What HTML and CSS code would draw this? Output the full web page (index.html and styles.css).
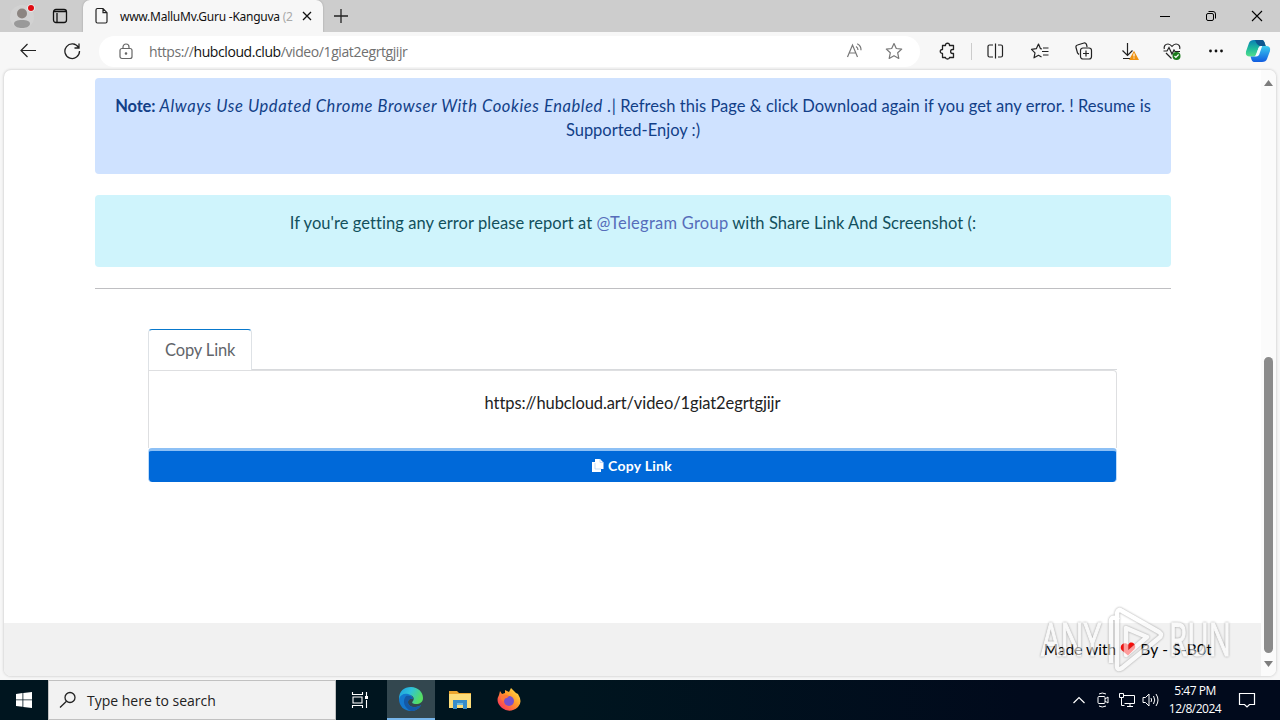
FILE: index.html
```html
<!DOCTYPE html>
<html lang="en">
<head>
<meta charset="utf-8">
<title>www.MalluMv.Guru -Kanguva</title>
<link rel="stylesheet" href="styles.css">
</head>
<body>
<div class="desktop">
  <header class="tabbar">
    <svg class="avatar" width="26" height="28" viewBox="0 0 26 28"><circle cx="13" cy="15" r="12" fill="#d2d2d2"/><circle cx="13" cy="11.500" r="5" fill="#8c8581"/><path d="M5 22c0-3 3-4 8-4s8 1 8 4c-1 3-4 4-8 4s-7-1-8-4z" fill="#999"/><circle cx="22" cy="6" r="3.800" fill="#eee"/><circle cx="22" cy="6" r="3" fill="#e00b12"/></svg>
    <svg class="workspaces" width="16" height="16" viewBox="0 0 16 16" fill="none" stroke="#111" stroke-width="1.300"><rect x="1.500" y="1.500" width="13" height="13" rx="2.500"/><path d="M2 3.500h12M5 5v9"/></svg>
    <div class="tab">
      <svg width="14" height="18" viewBox="0 0 14 18" fill="none" stroke="#222" stroke-width="1.200"><path d="M2.500 1.500h5.500l4 4.200V14.500a1.500 1.500 0 0 1-1.500 1.500h-8A1.500 1.500 0 0 1 1 14.500V3A1.500 1.500 0 0 1 2.500 1.500zM8 1.500v4.200h4"/></svg>
      <span class="tab-title">www.MalluMv.Guru -Kanguva <i>(2</i></span>
      <svg width="10" height="10" viewBox="0 0 10 10" stroke="#111" stroke-width="1.300"><path d="M1 1l8 8M9 1l-8 8"/></svg>
    </div>
    <svg class="newtab" width="16" height="16" viewBox="0 0 16 16" stroke="#222" stroke-width="1.300"><path d="M8 1v14M1 8h14"/></svg>
    <div class="window-buttons">
      <svg width="12" height="12" viewBox="0 0 12 12" fill="none" stroke="#000"><path d="M1 6.500h10"/></svg>
      <svg width="12" height="12" viewBox="0 0 12 12" fill="none" stroke="#000"><rect x="1.500" y="3.500" width="7" height="7" rx="1.500"/><path d="M3.500 1.500H8a2.500 2.500 0 0 1 2.500 2.500v4.500"/></svg>
      <svg width="12" height="12" viewBox="0 0 12 12" fill="none" stroke="#000" stroke-width="1.100"><path d="M1 1l10 10M11 1L1 11"/></svg>
    </div>
  </header>

  <nav class="toolbar">
    <svg class="back" width="18" height="16" viewBox="0 0 18 16" fill="none" stroke="#222" stroke-width="1.200"><path d="M17 7.500H2M8.500 1L2 7.500 8.500 14"/></svg>
    <svg class="reload" width="18" height="18" viewBox="0 0 18 18" fill="none" stroke="#222" stroke-width="1.300"><path d="M15.500 5.500A7.300 7.300 0 1 0 16.500 9M16 1.500v4.500h-4.500"/></svg>
    <div class="address">
      <svg class="lock" width="14" height="17" viewBox="0 0 14 17" fill="none" stroke="#666" stroke-width="1.200"><rect x="1" y="5.500" width="12" height="10" rx="2"/><path d="M4 5.500V4a3 3 0 0 1 6 0v1.500"/><circle cx="7" cy="10.500" r=".7" fill="#666"/></svg>
      <span class="url">https://<b>hubcloud.club</b>/video/1giat2egrtgjijr</span>
      <svg class="read" width="18" height="18" viewBox="0 0 18 18" fill="none" stroke="#777" stroke-width="1.200"><path d="M1.500 15L6.500 3l5 12M3.300 11h6.500M10 4.500q2 1.200 2 3.500M11.200 1.800q4 2 3.800 6.500"/></svg>
      <svg width="18" height="18" viewBox="0 0 18 18" fill="none" stroke="#777" stroke-width="1.200" stroke-linejoin="round"><path d="M9 1.500l2.300 5 5.400.6-4 3.700 1.100 5.600L9 13.700l-4.800 2.700 1.100-5.600-4-3.700 5.400-.6z"/></svg>
    </div>
    <svg class="ext" width="20" height="20" viewBox="0 0 20 20" fill="none" stroke="#222" stroke-width="1.300" stroke-linejoin="round"><path d="M4.500 4.500H7.500C7 1.500 12 1.500 11.500 4.500H15.500V8.500H14.500C12 8.500 12 12.500 14.500 12.500H15.500V16.500H11.500C11.500 18.500 7.500 18.500 7.500 16.500H4.500V12.500C1.500 12.500 1.500 8.500 4.500 8.500z"/></svg>
    <span class="divider"></span>
    <svg class="split" width="20" height="20" viewBox="0 0 20 20" fill="none" stroke="#222" stroke-width="1.200"><path d="M8 4H4.500A1.500 1.500 0 0 0 3 5.500v9A1.500 1.500 0 0 0 4.500 16H8M13 4h3A1.500 1.500 0 0 1 17.500 5.500v9a1.500 1.500 0 0 1-1.500 1.500h-3M10.500 2.500v15"/></svg>
    <svg class="favs" width="20" height="20" viewBox="0 0 20 20" fill="none" stroke="#222" stroke-width="1.200" stroke-linejoin="round"><path d="M12 8l-1.500-.3L8.500 3 6.300 7.700 1.500 8.300l3.500 3.500-1 5 4.500-2.500 3 1.700M13 7h5.500M12 10.500h6.500M13 14h5.500"/></svg>
    <svg class="coll" width="20" height="20" viewBox="0 0 20 20" fill="none" stroke="#222" stroke-width="1.200"><path d="M5 13.500L3.500 12 2 6.500a2 2 0 0 1 1.500-2.500L10 2a2 2 0 0 1 2.500 1.500l.6 2.500"/><rect x="6.500" y="7" width="11" height="11" rx="2.500"/><path d="M12 9.500v6M9 12.500h6"/></svg>
    <svg class="down" width="20" height="20" viewBox="0 0 20 20" fill="none" stroke="#222" stroke-width="1.200"><path d="M8.500 2v12.500M3.500 9.500l5 5 5-5M4 17.500h7"/><path d="M15 11l4 7.500h-8z" fill="#ef9210" stroke="#ef9210"/><path d="M15 12.500v3M15 16.500v1" stroke="#fff"/></svg>
    <svg class="heart" width="20" height="20" viewBox="0 0 20 20" fill="none" stroke="#222" stroke-width="1.200"><path d="M2.300 8C1.500 5 3.500 3 6 3q2 0 4 2.300Q12 3 14 3c2.500 0 4.500 2 3.700 5M4 12l5.500 5.500M1.500 10H5l2-3.500 3 6.500 2-4 1 1.500h5"/><circle cx="14.500" cy="15" r="4" fill="#1b7b1c" stroke="none"/><path d="M12.500 15l1.400 1.400 2.700-2.900" stroke="#fff"/></svg>
    <svg class="dots" width="20" height="20" viewBox="0 0 20 20" fill="#111"><circle cx="4.500" cy="10" r="1.400"/><circle cx="10" cy="10" r="1.400"/><circle cx="15.500" cy="10" r="1.400"/></svg>
    <svg class="copilot" width="26" height="26" viewBox="0 0 26 26"><defs><linearGradient id="ca" x1="0" y1="0" x2="0" y2="1"><stop stop-color="#087fb4"/><stop offset=".55" stop-color="#20bd9b"/><stop offset="1" stop-color="#55df8b"/></linearGradient><linearGradient id="cb" x1="0" y1="0" x2="0" y2="1"><stop stop-color="#39ccef"/><stop offset="1" stop-color="#115ce0"/></linearGradient></defs><path d="M9 2h8q2 0 3 4l.7 2h-4.500q-2 0-2.700 2l-2 6q-.8 2.500-3 2.500H5q-5 0-4-5L4 5q1-3 5-3z" fill="url(#ca)"/><path d="M17 24H9q-2 0-3-4l-.4-1.500h4q2 0 2.700-2l2-6q.8-2.500 3-2.500H21q5 0 4 5l-3 8q-1 3-5 3z" fill="url(#cb)"/><path d="M8 2h9q2 0 3 4l.7 2h-4.500Q12 8 10 2z" fill="#0e568f"/><path d="M13.500 10q.8-2 2.700-2h1l-3 8.500q-.8 2-3 2h-1z" fill="#f4fbff"/></svg>
  </nav>

  <main class="viewport">
    <div class="page">
      <div class="content">
        <div class="alert note"><div><strong>Note:</strong> <em>Always Use Updated Chrome Browser With Cookies Enabled .</em><span class="rest">| Refresh this Page &amp; click Download again if you get any error. ! Resume is</span></div><div>Supported-Enjoy :)</div></div>
        <div class="alert report">If you're getting any error please report at <a>@Telegram Group</a> with Share Link And Screenshot (:</div>
        <div class="rule"></div>
        <section class="share">
          <div class="share-tabs"><div class="share-tab">Copy Link</div><div class="tab-line"></div></div>
          <div class="share-panel">https://hubcloud.art/video/1giat2egrtgjijr</div>
          <div class="copy-button"><svg width="13" height="15" viewBox="0 0 13 15"><path d="M4 1h5l3.500 3.500V11H10v3H1V4h3z" fill="#fff"/><path d="M9 1v3.500h3.500M4 5v6h6" fill="none" stroke="#a9cdf4" stroke-width=".7"/></svg><span>Copy Link</span></div>
        </section>
      </div>
      <footer class="footer"><span>Made with</span><svg width="16" height="14" viewBox="0 0 16 14"><path d="M8 13.500L1.500 8C-1 4 3 0 6.500 1.500L8 2.800 9.500 1C13-.8 17 3 14.500 7z" fill="#fb0b08"/></svg><span>By - S-B0t</span></footer>
    </div>
    <div class="scrollbar"><svg width="9" height="6" viewBox="0 0 9 6"><path d="M4.500 0L9 6H0z" fill="#7d7d7d"/></svg><div class="thumb"></div><svg width="9" height="6" viewBox="0 0 9 6"><path d="M0 0h9L4.500 6z" fill="#7d7d7d"/></svg></div>
  </main>

  <div class="taskbar">
    <div class="start"><svg width="16" height="16" viewBox="0 0 16 16" fill="#fff"><path d="M0 2l6.500-1v6.500H0zM7.300.9L16 0v7.500H7.300zM0 8.300h6.500v6.500L0 14zM7.300 8.300H16V16l-8.700-1.100z"/></svg></div>
    <div class="search"><svg width="18" height="18" viewBox="0 0 18 18" fill="none" stroke="#222" stroke-width="1.300"><circle cx="11" cy="6.500" r="5"/><path d="M7.500 10.200L1 16.500"/></svg><span>Type here to search</span></div>
    <div class="task"><svg width="18" height="18" viewBox="0 0 18 18" fill="none" stroke="#fff" stroke-width="1.100"><path d="M1.500 1v2.500h10V1M1.500 17v-2.500h10V17M2 6h9v6H2zM15.500 1v4M15.500 9v8"/><path d="M14 5h3v3h-3z" fill="#fff" stroke="none"/></svg></div>
    <div class="task active"><svg width="26" height="26" viewBox="0 0 26 26"><defs><linearGradient id="ea" x1="0" y1="0" x2="1" y2=".4"><stop stop-color="#1b9de2"/><stop offset=".5" stop-color="#2fc2d9"/><stop offset="1" stop-color="#55dd63"/></linearGradient></defs><path d="M1 13C1 5 6 1 13 1c7 0 12 5 12 11 0 4-3 6-7 6-3 0-5-1-3-3 2-3 0-6-5-6-5 0-8 3-9 6z" fill="url(#ea)"/><path d="M1 13c1-4 5-6 9-5 3 .5 5 3 5 5-3-1-5 1-5 3 0 5 7 7 13 3-2 4-6 6-10 6C6 25 1 20 1 13z" fill="#1478ce"/><path d="M8 10c-4 5-2 12 5 15 4 0 8-2 10-6-6 4-13 2-13-3 0-2 2-4 5-3-1-3-4-4-7-3z" fill="#1459a7"/></svg></div>
    <div class="task"><svg width="24" height="22" viewBox="0 0 24 22"><path d="M1 2h8l2 2h12v15H1z" fill="#eba52e"/><path d="M1 5h22v14H1z" fill="#fcdc79"/><path d="M5 20v-9h14v9h-4v-4H9v4z" fill="#378cc9"/><path d="M9 14h6v2H9z" fill="#6db9df"/></svg></div>
    <div class="task"><svg width="26" height="26" viewBox="0 0 26 26"><defs><linearGradient id="fa" x1="1" y1="0" x2="0" y2="1"><stop stop-color="#fff04e"/><stop offset=".45" stop-color="#ff982a"/><stop offset="1" stop-color="#f91a68"/></linearGradient></defs><path d="M3 8l1-4 2 3 3-1V3l4 2 2-4q3 3 5 5l2 1q5 8 0 13-8 7-16 1-7-6-3-13z" fill="url(#fa)"/><circle cx="13" cy="14" r="5" fill="#7651cc"/><path d="M5 10q4-4 8-1l-2 2q-3 0-3 3-4-1-3-4z" fill="#ff7936"/></svg></div>
    <div class="tray">
      <svg width="12" height="8" viewBox="0 0 12 8" fill="none" stroke="#fff" stroke-width="1.200"><path d="M.5 7L6 1.500 11.500 7"/></svg>
      <svg class="cam" width="12" height="16" viewBox="0 0 12 16" fill="none" stroke="#fff"><rect x="1" y="4.500" width="7" height="7" rx="1"/><path d="M8 7l3-2v6L8 9M2 2q3-2 7 0M2 14q3 2 7 0"/></svg>
      <svg class="net" width="18" height="16" viewBox="0 0 18 16" fill="none" stroke="#fff"><path d="M5 3.500h11.500v8H6.500M9 14.500h6M12 11.500v3M1.500 1.500h4v4h-4zM3.500 5.500v8h3"/></svg>
      <svg class="sound" width="18" height="16" viewBox="0 0 18 16" fill="none" stroke="#fff"><path d="M1 5.500h2.500L7 2v12l-3.500-3.500H1zM9 6q1.200 2 0 4M11.500 4q2.500 4 0 8M14 2q4 6 0 12"/></svg>
      <div class="clock"><span>5:47 PM</span><span>12/8/2024</span></div>
      <svg class="notify" width="18" height="18" viewBox="0 0 18 18" fill="none" stroke="#fff" stroke-width="1.200"><path d="M1.500 2.500h15v11h-5L9 16l-2.500-2.500h-5z"/></svg>
    </div>
  </div>
  <svg class="watermark" width="200" height="72" viewBox="0 0 200 72"><g fill="#fff" stroke="#fff" stroke-width="1.200"><text x="3" y="51" textLength="60" lengthAdjust="spacingAndGlyphs">ANY</text><text x="131" y="51" textLength="62" lengthAdjust="spacingAndGlyphs">RUN</text></g><path d="M73 58V16q0-4 4-3l4 2M84 6l37 21q4 3 0 6L84 63q-5 3-5-2V8q1-5 5-2zM88 23v27l21-18z" fill="none" stroke="#fff" stroke-width="4.500" stroke-linejoin="round"/></svg>
</div>
</body>
</html>
```

FILE: styles.css
```css
* { box-sizing: border-box; }
body { margin: 0; overflow: hidden; font-family: Lato, sans-serif; font-variant-ligatures: none; }
svg { display: block; flex: none; }
.desktop { position: relative; width: 1280px; height: 720px; background: #f7f7f7; display: flex; flex-direction: column; }
.tabbar { height: 32px; background: #cdcdcd; display: flex; align-items: center; }
.avatar { margin-left: 9px; }
.workspaces { margin-left: 17px; }
.tab { width: 240px; height: 32px; margin-left: 15px; background: #f7f7f7; border-radius: 7px 7px 0 0; display: flex; align-items: center; padding-left: 12px; box-shadow: 0 0 2px #999; clip-path: inset(0 -3px); }
.tab-title { width: 179px; margin-left: 11px; font: 12px "Noto Sans", sans-serif; letter-spacing: -.25px; white-space: nowrap; color: #111; }
.tab-title i { font-style: normal; color: #aaa; }
.tab-title + svg { margin-left: 3px; }
.newtab { margin-left: 10px; }
.window-buttons { margin-left: auto; margin-right: 17px; display: flex; gap: 34px; }
.toolbar { height: 38px; display: flex; align-items: center; background: #f7f7f7; }
.back { margin-left: 19px; }
.reload { margin-left: 26px; }
.address { width: 821px; height: 31px; margin-left: 18px; border-radius: 16px; background: #fff; display: flex; align-items: center; padding-left: 20px; }
.url { margin-left: 16px; width: 697px; font: 14px "Open Sans", sans-serif; letter-spacing: -.41px; color: #707070; white-space: nowrap; }
.url b { font-weight: 400; color: #111; }
.read + svg { margin-left: 21px; }
.ext { margin-left: 18px; }
.divider { width: 1px; height: 17px; margin: 0 13px; background: #ccc; }
.favs, .down { margin-left: 25px; }
.coll, .dots { margin-left: 24px; }
.heart { margin-left: 23px; }
.copilot { margin-left: 19px; }
.viewport { width: 1272px; height: 606px; margin-left: 4px; background: #fff; border-radius: 7px; display: flex; overflow: hidden; box-shadow: 0 0 3px #bbb; }
.page { width: 1257px; display: flex; flex-direction: column; }
.content { height: 553px; padding: 8px 90px 0 91px; }
.alert { width: 1076px; border-radius: 4px; text-align: center; font-size: 16.5px; line-height: 24px; padding-top: 16px; white-space: nowrap; }
.note { height: 96px; background: #cfe2ff; color: #123f88; }
.note strong { letter-spacing: -.15px; }
.note em { letter-spacing: .59px; }
.note .rest { letter-spacing: .04px; }
.report { height: 72px; margin-top: 21px; background: #cff4fc; color: #12505c; letter-spacing: .06px; }
.report a { color: #566dba; letter-spacing: .25px; }
.rule { width: 1076px; height: 1px; margin-top: 21px; background: #bfbfc2; }
.share { width: 969px; margin: 40px 0 0 53px; }
.share-tabs { display: flex; align-items: flex-end; height: 41px; }
.share-tab { width: 104px; height: 41px; border: 1px solid #dee2e6; border-top-color: #0878cc; border-bottom: 0; border-radius: 4px 4px 0 0; padding: 8px 0 0 16px; color: #62656a; font-size: 16.5px; line-height: 24px; letter-spacing: -.15px; white-space: nowrap; }
.tab-line { flex: 1; height: 1px; background: #d8dadd; }
.share-panel { height: 78px; border: 1px solid #dedfe1; border-bottom: 0; text-align: center; color: #222; padding-top: 20px; font-size: 16.5px; line-height: 24px; letter-spacing: -.1px; border-radius: 0 4px 0 0; }
.copy-button { height: 34px; border: 1px solid #bddcfb; border-top: 3px solid #8dc0f5; border-bottom: 0; background: #0069d9; border-radius: 4px; display: flex; align-items: center; justify-content: center; gap: 4px; padding: 0 2px 2px 0; color: #fff; font-size: 14px; font-weight: 700; letter-spacing: .25px; }
.footer { height: 53px; background: #f1f1f1; display: flex; justify-content: flex-end; align-items: center; padding: 0 49px 2px 0; gap: 4px; color: #000; font-size: 15.5px; }
.footer span:last-child { letter-spacing: .2px; }
.scrollbar { width: 15px; background: #fbfbfb; display: flex; flex-direction: column; align-items: center; padding: 10px 0 9px; }
.thumb { width: 9px; height: 296px; margin-top: 271px; margin-bottom: 8px; border-radius: 5px; background: #8b8b8b; }
.taskbar { margin-top: 4px; height: 40px; background: linear-gradient(90deg, #00151f 0, #00151f 45%, #010a1c 80%); display: flex; }
.start, .task { width: 48px; display: flex; align-items: center; justify-content: center; }
.search { width: 288px; background: #f2f2f2; border: 1px solid #c1c1c1; display: flex; align-items: center; padding-left: 10px; color: #222; font: 14px "Open Sans", sans-serif; }
.search span { margin-left: 10px; white-space: nowrap; }
.task { margin-right: 1px; }
.task.active { margin: 0 1px 0 2px; background: #33474f; border-bottom: 2px solid #77b6eb; }
.tray { margin-left: auto; margin-right: 24px; display: flex; align-items: center; }
.cam { margin-left: 12px; }
.net { margin-left: 9px; }
.sound { margin-left: 6px; }
.clock { width: 60px; margin-left: 5px; display: flex; flex-direction: column; align-items: center; color: #fff; font: 12px/18px "Open Sans", sans-serif; letter-spacing: -.5px; }
.notify { margin-left: 13px; }
.watermark { position: absolute; left: 1038px; top: 605px; opacity: .6; font: 46px "Open Sans", sans-serif; filter: drop-shadow(0 0 1px #666); }
```
